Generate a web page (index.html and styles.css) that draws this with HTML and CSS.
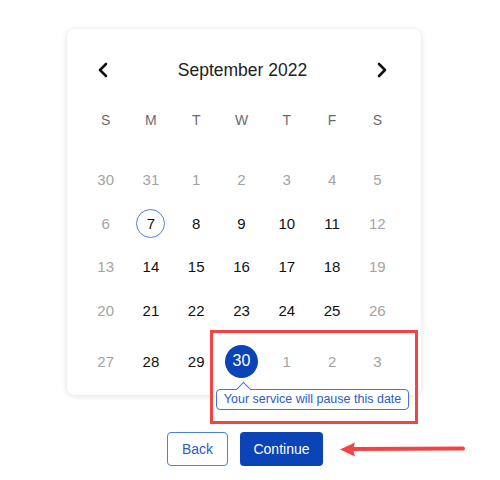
FILE: index.html
```html
<!doctype html>
<html lang="en">
<head>
    <meta charset="UTF-8">
    <title>Pause date</title>
    <link rel="stylesheet" href="styles.css">
</head>
<body>
    <div class="wrap">
        <div class="calendar">
            <div class="cal-head">
                <button class="nav prev" aria-label="Previous month">
                    <svg width="12" height="16" viewBox="0 0 12 16"><path d="M9 2 L3 8 L9 14" fill="none" stroke="#111" stroke-width="2.6" stroke-linecap="round" stroke-linejoin="round"/></svg>
                </button>
                <span class="month">September 2022</span>
                <button class="nav next" aria-label="Next month">
                    <svg width="12" height="16" viewBox="0 0 12 16"><path d="M3 2 L9 8 L3 14" fill="none" stroke="#111" stroke-width="2.6" stroke-linecap="round" stroke-linejoin="round"/></svg>
                </button>
            </div>
            <div class="weekdays">
                <span>S</span><span>M</span><span>T</span><span>W</span><span>T</span><span>F</span><span>S</span>
            </div>
            <div class="days">
                <span class="day muted">30</span>
                <span class="day muted">31</span>
                <span class="day muted">1</span>
                <span class="day muted">2</span>
                <span class="day muted">3</span>
                <span class="day muted">4</span>
                <span class="day muted">5</span>

                <span class="day muted">6</span>
                <span class="day"><b class="today">7</b></span>
                <span class="day">8</span>
                <span class="day">9</span>
                <span class="day">10</span>
                <span class="day">11</span>
                <span class="day muted">12</span>

                <span class="day muted">13</span>
                <span class="day">14</span>
                <span class="day">15</span>
                <span class="day">16</span>
                <span class="day">17</span>
                <span class="day">18</span>
                <span class="day muted">19</span>

                <span class="day muted">20</span>
                <span class="day">21</span>
                <span class="day">22</span>
                <span class="day">23</span>
                <span class="day">24</span>
                <span class="day">25</span>
                <span class="day muted">26</span>

                <span class="day muted">27</span>
                <span class="day">28</span>
                <span class="day">29</span>
                <span class="day picked">
                    <b class="selected">30</b>
                    <span class="tip">Your service will pause this date</span>
                </span>
                <span class="day muted">1</span>
                <span class="day muted">2</span>
                <span class="day muted">3</span>
            </div>
        </div>

        <div class="actions">
            <button class="btn btn-outline">Back</button>
            <button class="btn btn-primary">Continue</button>
        </div>

        <!-- callouts -->
        <div class="callout-box"></div>
        <svg class="callout-arrow" width="128" height="16" viewBox="0 0 128 16">
            <path d="M14 8 L124 7.5" stroke="#f24444" stroke-width="4" stroke-linecap="round"/>
            <path d="M1 8.5 L16 1.5 L14 8.5 L16 15.5 Z" fill="#f24444"/>
        </svg>
    </div>
</body>
</html>
```

FILE: styles.css
```css
body {
    margin: 0;
    font-family: "Liberation Sans", Arial, sans-serif;
    background: #fff;
    color: #111;
}
.wrap {
    position: relative;
    width: 354px;
    margin: 29px 0 0 67px;
}
.calendar {
    background: #fff;
    border-radius: 8px;
    box-shadow: 0 1px 6px rgba(0, 0, 0, 0.13);
    padding: 29px 21px 5px 16px;
}
.cal-head {
    display: flex;
    align-items: center;
    justify-content: space-between;
    height: 24px;
    padding: 0 12px 0 14px;
}
.nav {
    background: none;
    border: none;
    padding: 0;
    width: 12px;
    height: 16px;
    cursor: pointer;
    display: flex;
}
.month {
    font-size: 17.5px;
    color: #222;
}
.weekdays,
.days {
    display: grid;
    grid-template-columns: repeat(7, 1fr);
    text-align: center;
}
.weekdays {
    margin-top: 23px;
    height: 30px;
    align-items: center;
    font-size: 14px;
    color: #6b6b6b;
}
.days {
    margin-top: 23px;
    grid-template-rows: repeat(4, 43.5px) 58px;
    font-size: 15px;
}
.day {
    display: flex;
    align-items: center;
    justify-content: center;
    color: #111;
}
.day.muted {
    color: #a3a3a3;
}
.day b {
    font-weight: normal;
    display: flex;
    align-items: center;
    justify-content: center;
    border-radius: 50%;
}
.today {
    width: 27px;
    height: 27px;
    border: 1.5px solid #4a80e0;
}
.picked {
    position: relative;
}
.selected {
    width: 33px;
    height: 33px;
    background: #0a44b6;
    color: #fff;
    font-size: 16px;
}
.tip {
    position: absolute;
    left: -3px;
    top: 57px;
    white-space: nowrap;
    font-size: 12.5px;
    color: #2b5cc6;
    background: #fff;
    border: 1px solid #4176d9;
    border-radius: 4px;
    padding: 2px 7px 3px;
    z-index: 2;
}
.tip::before {
    content: "";
    position: absolute;
    left: 21px;
    top: -6px;
    width: 10px;
    height: 10px;
    background: #fff;
    border-top: 1px solid #4176d9;
    border-left: 1px solid #4176d9;
    transform: rotate(45deg);
}
.actions {
    display: flex;
    justify-content: center;
    gap: 12px;
    margin-top: 37px;
    padding-left: 2px;
}
.btn {
    font-family: inherit;
    font-size: 14px;
    height: 34px;
    border-radius: 4px;
    cursor: pointer;
}
.btn-outline {
    width: 61px;
    background: #fff;
    color: #2b5cc6;
    border: 1px solid #4a80e0;
}
.btn-primary {
    width: 83px;
    background: #0a44b6;
    color: #fff;
    border: none;
}
.callout-box {
    position: absolute;
    left: 143px;
    top: 301px;
    width: 202px;
    height: 88px;
    border: 3px solid #f24444;
}
.callout-arrow {
    position: absolute;
    left: 272px;
    top: 412px;
}
```
